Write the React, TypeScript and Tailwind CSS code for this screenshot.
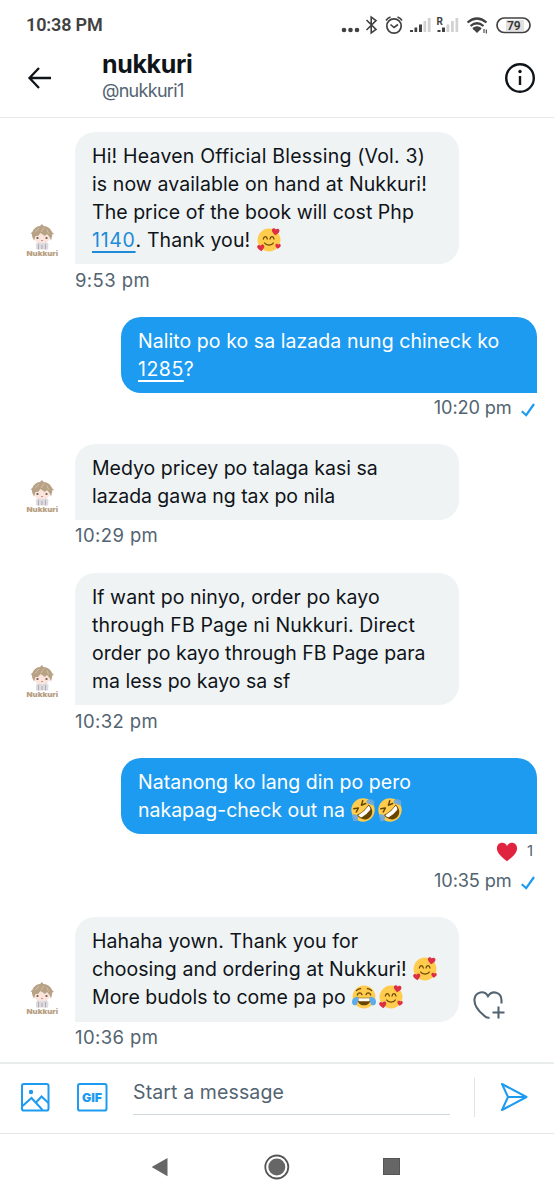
import React from 'react';

interface BubbleProps {
  mine?: boolean;
  className: string;
  children: React.ReactNode;
}

const HEART = 'M12 22C5 16.5 1 12.5 1 7.8 1 4.4 3.6 2 6.6 2 9 2 11 3.3 12 5.5 13 3.3 15 2 17.4 2 20.4 2 23 4.4 23 7.8 23 12.500 19 16.500 12 22Z';

const LoveFace = () => (
  <svg viewBox="0 0 36 36" className="inline-block h-6 w-6 mr-[3px] ml-px align-[-5px]">
    <circle cx="18" cy="18" r="17.2" fill="#FFCC4D" />
    <path d="M9.500 16.500C10.300 11.800 14.700 11.800 15.500 16.500M19.500 16.500C20.300 11.800 24.700 11.800 25.500 16.500M11.500 22.500C14 26.600 22 26.600 24.500 22.500" fill="none" stroke="#664500" strokeWidth="1.9" strokeLinecap="round" />
    <path d={HEART} fill="#DD2E44" transform="translate(21.500 -.5) rotate(8 6 6) scale(.52)" />
    <path d={HEART} fill="#DD2E44" transform="translate(0 24) rotate(-8 6 6) scale(.49)" />
    <path d={HEART} fill="#DD2E44" transform="translate(27 23) rotate(8 4 4) scale(.37)" />
  </svg>
);

const RoflFace = () => (
  <svg viewBox="0 0 36 36" className="inline-block h-6 w-6 mr-[3px] align-[-5px]">
    <circle cx="18" cy="18" r="17.5" fill="#FFCC4D" />
    <g transform="rotate(-42 18 18)">
      <path d="M6 17.500Q18 20.500 30 17.500C30.500 27 25.500 33 18 33S5.500 27 6 17.500Z" fill="#664500" />
      <path d="M7.500 19Q18 21.500 28.500 19C28.500 22 28 24.500 26 25Q18 26.500 10 25C8 24.500 7.500 22 7.500 19Z" fill="#fff" />
      <path d="M9 7.500L15 11 8.500 13.500M27 7.500L21 11 27.500 13.500" fill="none" stroke="#664500" strokeWidth="2.200" strokeLinecap="round" strokeLinejoin="round" />
    </g>
    <path d="M3 24.500C6 23.500 10 25.500 10.500 28 11 31 10 35 6 35 3 35 2 33 3 31 1 29 1 26 3 24.500Z" fill="#69A9E0" opacity=".9" />
    <path d="M23.500 4C26 1.500 31 1 33 3 35 4 36 8 34.500 10 33 12 30 10 28 9 25 9 22.500 6 23.500 4Z" fill="#69A9E0" opacity=".9" />
  </svg>
);

const JoyFace = () => (
  <svg viewBox="0 0 36 36" className="inline-block h-6 w-6 mr-[2px] ml-px align-[-5px]">
    <circle cx="18" cy="18" r="17.2" fill="#FFCC4D" />
    <path d="M8 19H28C28 26.500 24 30.500 18 30.500S8 26.500 8 19Z" fill="#664500" />
    <path d="M9.500 20H26.500V22.500C26.500 24 25.500 24.500 24.500 24.500H11.500C10.500 24.500 9.500 24 9.500 22.500Z" fill="#fff" />
    <path d="M8 15C9 10.800 13.500 10.800 15 14.500M21 14.500C22.500 10.800 27 10.800 28 15M6.500 8.500C8.500 6.500 10.500 5.500 13 5.500M23 5.500C25.500 5.500 27.500 6.500 29.500 8.500" fill="none" stroke="#664500" strokeWidth="1.900" strokeLinecap="round" />
    <path d="M9 17.500C3 17.500 0 21 0 25.500 0 29 2 30.500 4.500 30.500 9 30.500 9.500 23 9 17.500ZM27 17.500C33 17.500 36 21 36 25.500 36 29 34 30.500 31.500 30.500 27 30.500 26.500 23 27 17.500Z" fill="#5DADEC" />
  </svg>
);

const Avatar = () => (
  <svg viewBox="0 0 34 36" className="absolute bottom-[6px] left-[-50px] h-9 w-[34px]">
    <path d="M11 22L13 19.500H21L23.500 22 23 27.500H11Z" fill="#dddbdf" />
    <path d="M13.500 22V27.500M17 23V27M20.500 22V27.500" stroke="#a3a1a9" strokeWidth=".8" />
    <ellipse cx="17" cy="15.500" rx="8" ry="5.800" fill="#fae5dc" />
    <path d="M7.500 15.500C5.500 9 10 4.500 15 4L17 2 18.500 4C24 4.500 29 9 27 14.500L26 18.500 24.500 15 22 12 20 14 15.500 11 13 14 10.500 14 9 18.500Z" fill="#b8a286" />
    <path d="M6 11.500L9 10M28.500 12L26 10.500" stroke="#b8a286" strokeWidth="1.200" />
    <path d="M10 10.500L14 6M16 10L19 5.500M23.500 11.500L22 7.500" stroke="#d3c1a5" strokeWidth="1" />
    <path d="M12.500 15V17M21.500 15V17" stroke="#875954" strokeWidth="1.800" />
    <path d="M16 18.500H18" stroke="#cf7778" strokeWidth=".8" />
    <text x="1.500" y="33.500" textLength="31.500" lengthAdjust="spacingAndGlyphs" fill="#b8a184" fontFamily="Inter, sans-serif" fontSize="6.800" fontWeight="900">Nukkuri</text>
  </svg>
);

const Bubble: React.FC<BubbleProps> = ({ mine, className, children }) => (
  <div
    className={`relative whitespace-nowrap px-[17px] pt-[10px] text-[19.500px] leading-[28.200px] ${
      mine
        ? 'ml-[121px] w-[416px] rounded-[20px] rounded-br-none bg-[#1d9bf0] text-white'
        : 'ml-[75px] w-[384px] rounded-[20px] rounded-bl-none bg-[#eff3f4] text-[#0f1419]'
    } ${className}`}
  >
    {!mine && <Avatar />}
    {children}
  </div>
);

const Received = ({ time }: { time: string }) => (
  <div className="h-[53px] pt-[3.500px] pl-[75px] text-[18.500px] leading-6 tracking-[0.400px] text-[#536471]">{time}</div>
);

const Sent = ({ time }: { time: string }) => (
  <div className="flex justify-end gap-[9px] pr-[19.500px] text-[18.200px] leading-6 tracking-[-0.150px] text-[#536471]">
    <span>{time}</span>
    <svg viewBox="0 0 14 14" className="mt-[8px] h-[14px] w-[14px]" fill="none" stroke="#1d9bf0" strokeWidth="2.200">
      <path d="M.8 8.200L5.200 12.200 13 1" />
    </svg>
  </div>
);

const StatusBar = () => (
  <div className="flex h-[44px] items-center pl-[26px] pt-[5px] text-[#414141]">
    <span className="w-[315px] font-[Roboto] text-[18px] font-semibold leading-6 tracking-[-0.150px]">10:38 PM</span>
    <svg viewBox="341 11 193 26" className="h-[26px] w-[193px]" fill="none" stroke="#414141">
      <g fill="#414141" stroke="none">
        <circle cx="344" cy="29" r="2.300" />
        <circle cx="350.500" cy="29" r="2.300" />
        <circle cx="357" cy="29" r="2.300" />
      </g>
      <path d="M366.500 19L376 28.500 371.200 32V16L376 19.500 366.500 29" strokeWidth="1.600" />
      <circle cx="394" cy="25" r="7.200" strokeWidth="1.700" />
      <path d="M390.500 23.500L394 26.500 398 23.500M386 19.500Q387.500 17 390.500 16M397.500 16Q400.500 17 402 19.500" strokeWidth="1.600" />
      <g stroke="none" fill="#414141">
        <path d="M410 29H413V31H410ZM414.500 26.500H417.200V31H414.500ZM419 23.500H422V31H419ZM437.500 29H440.500V31H437.500ZM442 26.500H445V31H442Z" />
        <path fill="#d2d2d2" d="M423.500 20H426.200V31H423.500ZM427.800 17H430.600V31H427.800ZM446.500 23.500H449.300V31H446.500ZM451 20H453.800V31H451ZM455.500 17H458.200V31H455.500Z" />
        <text x="436.500" y="23.500" fontFamily="Roboto, sans-serif" fontSize="10" fontWeight="700">R</text>
        <path d="M473.500 28.500Q477 26 480.500 28.500L477 32Z" />
      </g>
      <path d="M467.500 21.500Q477 13.500 486.500 21.500M470.500 25Q477 19.500 483.500 25M473 28Q477 25 481 28" strokeWidth="2.200" />
      <path d="M484 28V32M486.300 28.500V32.500" strokeWidth="1.100" />
      <rect x="506" y="19" width="18" height="11" fill="#e1e1e1" stroke="none" />
      <rect x="497" y="17" width="33" height="14.500" rx="7.200" strokeWidth="1.700" />
      <text x="507" y="28.500" stroke="none" fill="#333" fontFamily="Roboto, sans-serif" fontSize="12" fontWeight="600">79</text>
    </svg>
  </div>
);

const Header = () => (
  <header className="flex h-[74px] border-b border-[#e7e9ea]">
    <svg viewBox="0 0 24 24" className="mt-[21.500px] ml-[27px] h-6 w-6" fill="none" stroke="#0f1419" strokeWidth="2.300">
      <path d="M12 2L2.500 12 12 22M2.500 12H24" />
    </svg>
    <div className="ml-[51px] flex-1">
      <h1 className="mt-[4px] text-[25px] leading-[33px] font-bold tracking-[-0.350px] text-[#0f1419]">nukkuri</h1>
      <p className="pt-px text-[18px] leading-[18px] tracking-[-0.700px] text-[#536471]">@nukkuri1</p>
    </div>
    <svg viewBox="0 0 32 32" className="mt-[18px] mr-[18px] h-8 w-8" fill="none" stroke="#0f1419" strokeWidth="2.400">
      <circle cx="16" cy="16" r="13.800" />
      <path d="M16 14V23" />
      <circle cx="16" cy="9.500" r="1.700" fill="#0f1419" stroke="none" />
    </svg>
  </header>
);

const Composer = () => (
  <div className="flex h-[71px] border-t-2 border-[#e9eced]">
    <svg viewBox="0 0 30 30" className="mt-[18px] ml-[20px] h-[30px] w-[30px]" fill="none" stroke="#1d9bf0" strokeWidth="2">
      <rect x="2" y="2" width="26.500" height="26.500" rx="1.800" />
      <path d="M2.500 24L11.500 16 22.500 28M16.500 20L21.500 14.500 28.500 21" />
      <circle cx="11" cy="10" r="2.200" fill="#1d9bf0" stroke="none" />
    </svg>
    <svg viewBox="0 0 32 30" className="mt-[18px] ml-[26px] h-[30px] w-[32px]" fill="none" stroke="#1d9bf0" strokeWidth="2">
      <rect x="2" y="2" width="28.500" height="26.500" rx="1.800" />
      <text x="6" y="19.500" textLength="20" lengthAdjust="spacingAndGlyphs" fill="#1d9bf0" stroke="none" fontFamily="Inter, sans-serif" fontSize="12" fontWeight="900">GIF</text>
    </svg>
    <div className="ml-[25px] h-[51px] w-[317px] border-b-[1.500px] border-[#cfd8dc] pt-[14px] text-[19.500px] leading-7 tracking-[0.120px] text-[#536471]">
      Start a message
    </div>
    <div className="mt-[14px] ml-[24px] h-[39px] w-px bg-[#e1e4e6]" />
    <svg viewBox="0 0 28 30" className="mt-[18px] ml-[25px] h-[30px] w-[28px]" fill="none" stroke="#1d9bf0" strokeWidth="2" strokeLinejoin="round">
      <path d="M2 2L26.500 15 2 28 8 15ZM8 15H26.500" />
    </svg>
  </div>
);

const NavBar = () => (
  <nav className="flex h-[67px] border-t border-[#e4e6e7] pt-[19px]">
    <svg viewBox="0 0 18 20" className="mt-[4px] ml-[151px] h-5 w-[18px]" fill="#666">
      <path d="M16.500 1V19.200L1.500 10.600Q.5 10 1.500 9.400Z" />
    </svg>
    <svg viewBox="0 0 28 28" className="ml-[94px] h-7 w-7" fill="none" stroke="#555" strokeWidth="1.800">
      <circle cx="13.800" cy="14" r="11.500" />
      <circle cx="13.800" cy="14" r="8.500" fill="#666" stroke="none" />
    </svg>
    <div className="mt-[5px] ml-[92px] h-[17px] w-[17px] border border-[#555] bg-[#666]" />
  </nav>
);

export default function App() {
  return (
    <div className="h-[1200px] w-[554px] overflow-hidden bg-white font-[Inter,sans-serif]">
      <StatusBar />
      <Header />
      <main className="h-[944px] pt-[13.500px]">
        <Bubble className="h-[132.500px]">
          <div className="tracking-[0.200px]">Hi! Heaven Official Blessing (Vol. 3)</div>
          <div className="tracking-[0.100px]">is now available on hand at Nukkuri!</div>
          <div className="tracking-[0.040px]">The price of the book will cost Php</div>
          <div className="tracking-[0.120px]"><span className="tracking-[0.700px] text-[#1d8bd8] underline decoration-[1.500px] underline-offset-4">1140</span>. Thank you! <LoveFace /></div>
        </Bubble>
        <Received time="9:53 pm" />

        <Bubble mine className="h-[75.500px]">
          <div className="tracking-[0.060px]">Nalito po ko sa lazada nung chineck ko</div>
          <div><span className="tracking-[0.500px] underline decoration-[1.500px] underline-offset-4">1285</span>?</div>
        </Bubble>
        <div className="h-[51.500px] pt-[2px]">
          <Sent time="10:20 pm" />
        </div>

        <Bubble className="h-[75.500px]">
          <div>Medyo pricey po talaga kasi sa</div>
          <div className="tracking-[-0.060px]">lazada gawa ng tax po nila</div>
        </Bubble>
        <Received time="10:29 pm" />

        <Bubble className="h-[132.500px]">
          <div className="tracking-[0.060px]">If want po ninyo, order po kayo</div>
          <div className="tracking-[0.140px]">through FB Page ni Nukkuri. Direct</div>
          <div>order po kayo through FB Page para</div>
          <div>ma less po kayo sa sf</div>
        </Bubble>
        <Received time="10:32 pm" />

        <Bubble mine className="h-[75.500px]">
          <div className="tracking-[0.030px]">Natanong ko lang din po pero</div>
          <div>nakapag-check out na <RoflFace /><RoflFace /></div>
        </Bubble>
        <div className="h-[83.500px] pt-[7px]">
          <div className="mb-[5px] flex h-[22px] items-center justify-end gap-[9px] pr-[21px] text-[15px] text-[#536471]">
            <svg viewBox="0 0 24 24" className="h-[22px] w-[22px]"><path d={HEART} fill="#E0243F" /></svg>
            <span>1</span>
          </div>
          <Sent time="10:35 pm" />
        </div>

        <Bubble className="h-[104.500px]">
          <div className="tracking-[0.080px]">Hahaha yown. Thank you for</div>
          <div className="tracking-[0.040px]">choosing and ordering at Nukkuri! <LoveFace /></div>
          <div className="tracking-[0.020px]">More budols to come pa po <JoyFace /><LoveFace /></div>
          <svg viewBox="0 0 34 32" className="absolute top-[72px] left-[396.500px] h-8 w-[34px]" fill="none" stroke="#536471" strokeWidth="2.100">
            <path d="M17.500 28.500Q15 29.500 12 26.500C4 20 2 15 2.500 10 3.500 2.500 12.500 1 16 7.200 20 1 29.500 2.500 29.500 11.500V14.500M26.500 17.500V29.500M20.500 23.500H32.500" />
          </svg>
        </Bubble>
        <Received time="10:36 pm" />
      </main>
      <Composer />
      <NavBar />
    </div>
  );
}
